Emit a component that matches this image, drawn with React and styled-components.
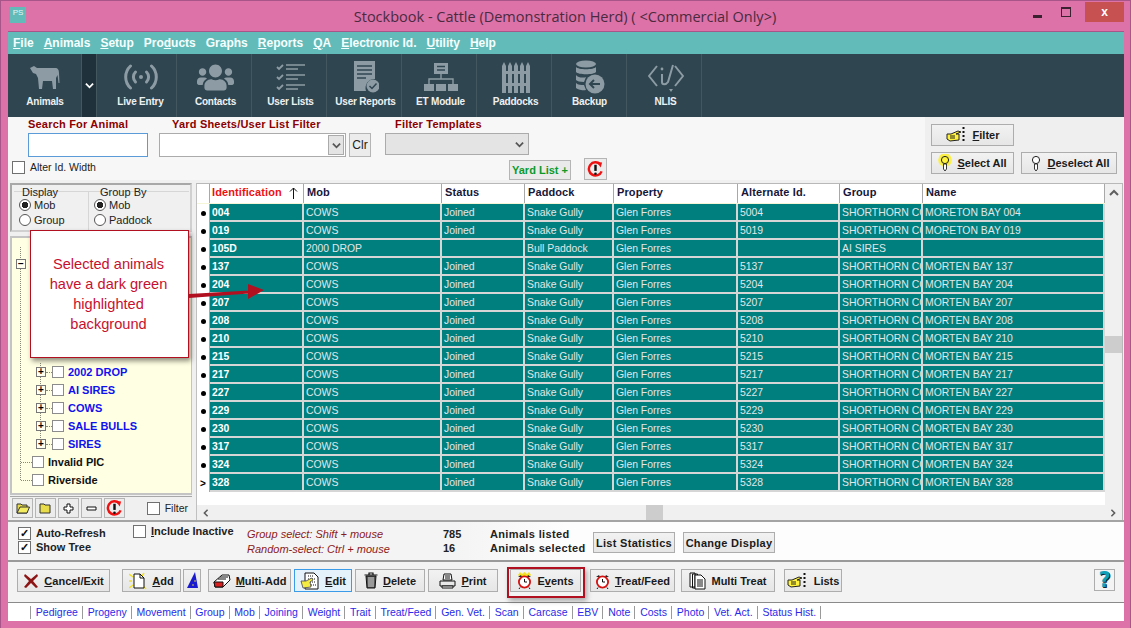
import React from 'react';
import styled, { createGlobalStyle } from 'styled-components';
import { FaUsers } from 'react-icons/fa';

const GlobalStyle = createGlobalStyle`
  html, body { margin: 0; padding: 0; background: #dc72a8; overflow: hidden; }
  * { box-sizing: border-box; }
  body { font-family: "Liberation Sans", Arial, sans-serif; }
`;

const COLUMNS = '13px 94px 138px 83px 89px 124px 102px 83px 182px';
const LABEL_RED = '#8b0000';

const Shell = styled.div`
  width: 1131px;
  height: 628px;
  background: #dc72a8;
  border: 1px solid #a8558a;
  border-bottom: 0;
  display: flex;
  flex-direction: column;
  overflow: hidden;
  position: relative;
`;

const TitleBar = styled.div`
  height: 30px;
  flex: none;
  display: flex;
  align-items: flex-start;
  position: relative;
  padding-left: 9px;
`;

const AppIcon = styled.div`
  width: 16px;
  height: 16px;
  margin-top: 6px;
  background: #62bbb8;
  color: #e6f5f4;
  font-size: 8px;
  text-align: center;
  line-height: 12px;
`;

const TitleText = styled.div`
  flex: 1;
  text-align: center;
  font-family: "Open Sans", sans-serif;
  font-size: 14.5px;
  line-height: 31px;
  color: #4b2a3f;
  padding-left: 77px;
`;

const WinControls = styled.div`
  display: flex;
  align-items: flex-start;
  margin-right: 6px;
  margin-top: 1px;
`;

const WinGlyph = styled.div`
  width: ${p => p.$w}px;
  height: 20px;
  display: flex;
  align-items: center;
  justify-content: center;
  background: ${p => p.$close ? '#c75050' : 'transparent'};
  color: #fff;
  font-size: 12px;
  font-weight: bold;
`;

const MinBar = styled.span`
  width: 9px;
  height: 3px;
  margin-top: 8px;
  background: #3a2230;
`;

const MaxBox = styled.span`
  width: 10px;
  height: 10px;
  border: 1px solid #3a2230;
  border-top-width: 2px;
`;

const Content = styled.div`
  margin: 0 6px 0 7px;
  height: 590px;
  flex: none;
  display: flex;
  flex-direction: column;
  background: #f0f0f0;
`;

const MenuBar = styled.div`
  height: 23px;
  flex: none;
  background: #62bbb8;
  border-top: 1px solid #a8558a;
  display: flex;
  align-items: center;
  padding-left: 5px;
  gap: 10px;
`;

const MenuItem = styled.span`
  color: #f6ffff;
  font-size: 12px;
  font-weight: bold;
`;

const ToolBar = styled.div`
  height: 63px;
  flex: none;
  background: #2f4550;
  display: flex;
`;

const ToolItem = styled.div`
  width: ${p => p.$w || 75}px;
  display: flex;
  flex-direction: column;
  align-items: center;
  color: #8d9ca4;
  border-right: 1px solid #43575f;
  padding-top: 7px;
  padding-left: ${p => p.$left ?? 3}px;
`;

const ToolArrow = styled.div`
  width: 15px;
  background: #1f323b;
  display: flex;
  align-items: center;
  justify-content: center;
  border-right: 1px solid #43575f;
`;

const ToolIconBox = styled.div`
  height: 32px;
  display: flex;
  align-items: center;
  justify-content: center;
`;

const ToolLabel = styled.div`
  color: #eef1f2;
  font-size: 10px;
  font-weight: bold;
  letter-spacing: -0.2px;
  margin-top: 3px;
  white-space: nowrap;
`;

const FilterBar = styled.div`
  height: 63px;
  flex: none;
  background: #f7f7f7;
  display: flex;
`;

const FilterGrid = styled.div`
  flex: 1;
  display: grid;
  grid-template-columns: 147px 226px 1fr;
  grid-template-rows: 16px 25px 1fr;
  padding-left: 4px;
`;

const FieldLabel = styled.div`
  color: ${LABEL_RED};
  font-size: 11px;
  font-weight: bold;
  letter-spacing: 0.2px;
  line-height: 15px;
  padding-left: ${p => p.$indent || 0}px;
  white-space: nowrap;
`;

const SearchInput = styled.div`
  width: 120px;
  height: 24px;
  margin-left: 16px;
  background: #fff;
  border: 1px solid #5a9bd8;
`;

const SelectRow = styled.div`
  display: flex;
  gap: 3px;
`;

const FakeSelect = styled.div`
  width: ${p => p.$w}px;
  height: ${p => p.$h || 24}px;
  background: ${p => p.$grey ? '#e4e4e4' : '#fff'};
  border: 1px solid #ababab;
  display: flex;
  justify-content: flex-end;
  align-items: center;
`;

const SelectArrow = styled.div`
  width: 16px;
  height: 20px;
  margin-right: 1px;
  background: ${p => p.$flat ? 'transparent' : '#e4e4e4'};
  border: ${p => p.$flat ? '0' : '1px solid #aaa'};
  display: flex;
  align-items: center;
  justify-content: center;
`;

const ClrButton = styled.div`
  width: 22px;
  height: 24px;
  background: #ececec;
  border: 1px solid #b5b5b5;
  font-size: 12px;
  line-height: 22px;
  text-align: center;
  color: #222;
`;

const AlterRow = styled.div`
  display: flex;
  align-items: center;
  gap: 5px;
  font-size: 10.5px;
  color: #222;
  height: 14px;
  margin-top: 2px;
`;

const CheckBox = styled.span`
  width: 13px;
  height: 13px;
  flex: none;
  background: #fff;
  border: 1px solid #707070;
  display: inline-flex;
  align-items: center;
  justify-content: center;
  font-size: 11px;
  font-weight: bold;
  line-height: 1;
  color: #111;
`;

const FilterActions = styled.div`
  grid-column: 3;
  display: flex;
  gap: 13px;
  padding-left: 124px;
  align-items: flex-start;
`;

const YardButton = styled.div`
  width: 62px;
  height: 20px;
  margin-top: 2px;
  background: #eaeaea;
  border: 1px solid #b5b5b5;
  color: #0a9a2a;
  font-size: 11px;
  font-weight: bold;
  line-height: 18px;
  text-align: center;
`;

const SquareButton = styled.div`
  width: 23px;
  height: 22px;
  background: #ececec;
  border: 1px solid #b5b5b5;
  display: flex;
  align-items: center;
  justify-content: center;
`;

const SelectPanel = styled.div`
  width: 199px;
  flex: none;
  padding: 7px 7px 0 6px;
  background: #efefef;
  display: grid;
  grid-template-columns: 83px 96px;
  grid-template-rows: 22px 22px;
  column-gap: 7px;
  row-gap: 6px;
`;

const Btn = styled.div`
  width: ${p => p.$w}px;
  height: ${p => p.$h || 23}px;
  flex: none;
  position: relative;
  margin-left: ${p => p.$ml || 0}px;
  background: ${p => p.$active ? '#e5f1fb' : 'linear-gradient(#f2f2f2, #e6e6e6)'};
  border: 1px solid ${p => p.$active ? '#3c9be8' : '#adadad'};
  display: flex;
  align-items: center;
  justify-content: center;
  gap: 5px;
  font-size: 11px;
  font-weight: bold;
  letter-spacing: ${p => p.$wide ? '0.3px' : '0'};
  color: #1a1a1a;
  white-space: nowrap;
  &::after {
    content: '';
    display: ${p => p.$marked ? 'block' : 'none'};
    position: absolute;
    left: -4px;
    right: -5px;
    top: -3px;
    bottom: -7px;
    border: 2px solid #b01020;
    box-shadow: 2px 3px 5px rgba(0, 0, 0, 0.3);
  }
`;

const MainArea = styled.div`
  height: 340px;
  flex: none;
  display: flex;
  background: #f0f0f0;
`;

const LeftPanel = styled.div`
  width: 182px;
  margin-left: 2px;
  margin-right: 4px;
  flex: none;
  display: flex;
  flex-direction: column;
  padding-top: 3px;
`;

const GroupBox = styled.div`
  height: 49px;
  flex: none;
  border: 2px solid #a8a8a8;
  border-right-color: #d0d0d0;
  border-bottom-color: #d0d0d0;
  padding: 2px 1px 0 2px;
  display: flex;
  font-size: 11px;
  color: #222;
`;

const GroupCol = styled.div`
  width: ${p => p.$w}px;
  border-top: 1px solid #d6d6d6;
  border-right: ${p => p.$divide ? '1px solid #d6d6d6' : '0'};
  margin-top: 4px;
  padding-left: 5px;
`;

const GroupTitle = styled.div`
  margin-top: -5px;
  padding-left: ${p => p.$indent}px;
  line-height: 11px;
  margin-bottom: -1px;
`;

const RadioRow = styled.div`
  height: 15px;
  display: flex;
  align-items: center;
  gap: 3px;
`;

const Radio = styled.span`
  width: 12px;
  height: 12px;
  border: 1px solid #555;
  border-radius: 50%;
  background: ${p => p.$on ? 'radial-gradient(circle, #222 0 3px, #fff 3.5px)' : '#fff'};
`;

const Tree = styled.div`
  height: 259px;
  flex: none;
  margin-top: 4px;
  background: #ffffe3;
  border: 2px solid #c4c4c4;
  border-right-width: 1px;
  padding: 9px 0 0 8px;
  overflow: hidden;
`;

const Trunk = styled.div`
  height: 233px;
  padding-top: 116px;
  border-left: 1px dotted #8a8a7a;
  position: relative;
`;

const ExpandBox = styled.span`
  width: 10px;
  height: 10px;
  flex: none;
  background: #fffff0;
  border: 1px solid #777;
  display: inline-flex;
  align-items: center;
  justify-content: center;
  font-size: 10px;
  line-height: 8px;
  color: #000;
  font-weight: bold;
`;

const RootToggle = styled(ExpandBox)`
  position: absolute;
  left: -5px;
  top: 12px;
`;

const Branch = styled.div`
  margin-left: 19px;
  height: 81px;
  margin-bottom: 9px;
  border-left: 1px dotted #8a8a7a;
`;

const TreeRow = styled.div`
  height: 18px;
  display: flex;
  align-items: center;
  margin-left: ${p => p.$indent || 0}px;
  font-size: 11px;
  font-weight: bold;
  color: ${p => p.$leaf ? '#1111f0' : '#111'};
`;

const TreeDash = styled.span`
  width: ${p => p.$w}px;
  flex: none;
  border-top: 1px dotted #8a8a7a;
`;

const TreeCheck = styled.span`
  width: 12px;
  height: 12px;
  flex: none;
  background: #fff;
  border: 1px solid #8c8c8c;
  margin-right: 4px;
`;

const TreeTools = styled.div`
  height: 23px;
  flex: none;
  margin-top: 1px;
  border-top: 1px solid #a8a8a8;
  display: flex;
  align-items: center;
  padding-left: 2px;
  gap: 2px;
`;

const TinyButton = styled.div`
  width: 21px;
  height: 20px;
  background: #ececec;
  border: 1px solid #b5b5b5;
  display: flex;
  align-items: center;
  justify-content: center;
`;

const TreeFilter = styled.div`
  margin-left: auto;
  display: flex;
  align-items: center;
  gap: 5px;
  font-size: 10.5px;
  color: #222;
  padding-right: 4px;
`;

const GridPanel = styled.div`
  width: 927px;
  flex: none;
  margin-top: 3px;
  border-top: 1px solid #b8b8b8;
  border-left: 1px solid #c0c0c0;
  border-right: 1px solid #b8b8b8;
  display: flex;
  flex-direction: column;
  height: 337px;
  background: #fff;
`;

const GridBody = styled.div`
  flex: 1;
  display: flex;
  min-height: 0;
`;

const Table = styled.div`
  width: 908px;
  flex: none;
  overflow: hidden;
`;

const HeaderRow = styled.div`
  display: grid;
  grid-template-columns: ${COLUMNS};
  height: 20px;
  background: #fff;
  border-bottom: 1px solid #f5f5d8;
`;

const HeaderCell = styled.div`
  border-right: 1px solid #a8a8a8;
  padding: 0 5px 2px ${p => p.$first ? 2 : 3}px;
  font-size: 11px;
  font-weight: bold;
  line-height: 17px;
  letter-spacing: 0.1px;
  color: ${p => p.$red ? '#f01010' : '#16163a'};
  display: flex;
  align-items: center;
  justify-content: space-between;
`;

const DataRow = styled.div`
  display: grid;
  grid-template-columns: ${COLUMNS};
  height: 18px;
`;

const Marker = styled.div`
  background: #fff;
  border-right: 1px solid #a8a8a8;
  display: flex;
  align-items: center;
  justify-content: center;
  font-size: 10px;
  color: #000;
`;

const Dot = styled.span`
  width: 5px;
  height: 5px;
  border-radius: 50%;
  background: #000;
`;

const Cell = styled.div`
  background: #007f7f;
  border-right: 2px solid #d6d6d6;
  border-bottom: 2px solid #d6d6d6;
  padding-left: 2px;
  font-size: 10.4px;
  font-weight: ${p => p.$bold ? 'bold' : 'normal'};
  color: ${p => p.$bold ? '#fff' : '#e0e8e8'};
  line-height: 17px;
  white-space: nowrap;
  overflow: hidden;
`;

const ScrollV = styled.div`
  width: 17px;
  flex: none;
  background: #f0f0f0;
  display: flex;
  flex-direction: column;
  align-items: center;
`;

const ScrollArrow = styled.div`
  height: 17px;
  display: flex;
  align-items: center;
  justify-content: center;
  flex: none;
`;

const ThumbV = styled.div`
  width: 100%;
  height: 17px;
  margin-top: 135px;
  background: #cdcdcd;
`;

const ScrollH = styled.div`
  height: 15px;
  flex: none;
  background: #f0f0f0;
  display: flex;
  align-items: center;
  justify-content: space-between;
  padding: 0 5px;
`;

const ThumbH = styled.div`
  width: 17px;
  height: 15px;
  background: #cdcdcd;
  margin-left: 432px;
  margin-right: 442px;
`;

const StatusPanel = styled.div`
  height: 40px;
  flex: none;
  display: flex;
  background: linear-gradient(90deg, #f4f4f4 40%, #fdfdfd 50%);
  border-top: 2px solid #a4a4a4;
`;

const CheckStack = styled.div`
  width: 125px;
  flex: none;
  padding: 4px 0 0 10px;
`;

const CheckLine = styled.div`
  height: 14px;
  display: flex;
  align-items: center;
  gap: 5px;
  font-size: 11px;
  font-weight: bold;
  color: #222;
  white-space: nowrap;
`;

const InactiveCol = styled.div`
  width: 114px;
  flex: none;
  padding-top: 2px;
`;

const HintCol = styled.div`
  width: 196px;
  flex: none;
  padding-top: 5px;
  font-size: 11px;
  font-style: italic;
  color: #8b1a1a;
  line-height: 15px;
  white-space: nowrap;
`;

const CountCol = styled.div`
  width: 47px;
  flex: none;
  padding-top: 5px;
  font-size: 11px;
  font-weight: bold;
  line-height: 14px;
  color: #222;
`;

const CountLabels = styled(CountCol)`
  width: 103px;
  letter-spacing: 0.35px;
`;

const StatusButtons = styled.div`
  display: flex;
  gap: 8px;
  padding-top: 10px;
`;

const ActionBar = styled.div`
  height: 43px;
  flex: none;
  background: #f3f3f3;
  border-top: 2px solid #9a9a9a;
  border-bottom: 1px solid #8a8a8a;
  display: flex;
  align-items: flex-start;
  padding: 7px 0 0 9px;
`;

const HelpBtn = styled(Btn)`
  margin-left: auto;
  margin-right: 9px;
  background: #f4f4f4;
`;

const LinkBar = styled.div`
  height: 18px;
  flex: none;
  background: #fff;
  display: flex;
  align-items: center;
  padding-left: 22px;
`;

const LinkItem = styled.span`
  height: 13px;
  display: flex;
  align-items: center;
  padding: 0 4px 0 4.8px;
  border-left: 1px solid #9a9a9a;
  border-right: ${p => p.$last ? '1px solid #9a9a9a' : '0'};
  font-size: 10.5px;
  color: #2a2ae8;
  white-space: nowrap;
`;

const Callout = styled.div`
  position: absolute;
  left: 29px;
  top: 229px;
  width: 159px;
  height: 128px;
  background: #fff;
  border: 1px solid #b01020;
  box-shadow: 2px 3px 5px rgba(0, 0, 0, 0.45);
  display: flex;
  align-items: center;
  justify-content: center;
  text-align: center;
  color: #c8102e;
  font-size: 14.6px;
  line-height: 20px;
  padding: 0 12px 0 10px;
`;

const CalloutArrow = styled.svg`
  position: absolute;
  left: 186px;
  top: 279px;
`;

const ChevronSvg = styled.svg`
  transform: rotate(${p => p.$rot || 0}deg);
`;

// tool bar drawings
const CowIcon = () => (
  <svg width="30" height="26" viewBox="0 0 30 26" fill="currentColor">
    <path d="M0 4 L4 2 L7 4 L25 4 C28 4 29 6 29 9 L29.5 19 L28.5 19 L27.5 11 L26 14 L26 25 L23 25 L22 17 L13 17 L12 25 L9 25 L8 14 L6 10 L3 9 Z" />
  </svg>
);

const LiveIcon = () => (
  <svg width="34" height="26" viewBox="0 0 34 26" fill="none" stroke="currentColor" strokeWidth="3" strokeLinecap="round">
    <circle cx="17" cy="13" r="2" fill="currentColor" stroke="none" />
    <path d="M11.5 8 A7 7 0 0 0 11.5 18" />
    <path d="M22.5 8 A7 7 0 0 1 22.5 18" />
    <path d="M6.5 2 A15 15 0 0 0 6.5 24" />
    <path d="M27.5 2 A15 15 0 0 1 27.5 24" />
  </svg>
);

const ListsIcon = () => (
  <svg width="30" height="28" viewBox="0 0 30 28" fill="none" stroke="currentColor">
    <path d="M1 4 L3 6 L7 2 M1 14 L3 16 L7 12 M1 24 L3 26 L7 22" strokeWidth="1.8" />
    <path d="M10 2 H29 M10 6 H22 M10 12 H29 M10 16 H22 M10 22 H29 M10 26 H22" strokeWidth="1.6" />
  </svg>
);

const ReportIcon = () => (
  <svg width="26" height="33" viewBox="0 0 26 33" fill="currentColor">
    <path d="M1 0 H22 V18 A9 9 0 0 0 13 30 H1 Z" />
    <path d="M4 5 H19 M4 9 H19 M4 13 H19 M4 17 H13" stroke="#2f4550" strokeWidth="1.3" />
    <circle cx="20" cy="25" r="6.5" />
    <path d="M16.5 25 L19 27.5 L23.5 22.5" stroke="#2f4550" strokeWidth="1.5" fill="none" />
  </svg>
);

const OrgIcon = () => (
  <svg width="34" height="30" viewBox="0 0 34 30" fill="currentColor">
    <path d="M10 1 H24 V12 H10 Z" />
    <path d="M13 4.5 H21 M13 8 H21" stroke="#2f4550" strokeWidth="1.3" />
    <path d="M17 12 V17 M5 22 V17 H29 V22" stroke="currentColor" strokeWidth="1.4" fill="none" />
    <path d="M0 22 H10 V29 H0 Z M12 22 H22 V29 H12 Z M24 22 H34 V29 H24 Z" />
  </svg>
);

const FenceIcon = () => (
  <svg width="28" height="32" viewBox="0 0 28 32" fill="currentColor">
    <path d="M0 32 V5 L2 1 L4 5 V32 Z M6 32 V5 L8 1 L10 5 V32 Z M12 32 V5 L14 1 L16 5 V32 Z M18 32 V5 L20 1 L22 5 V32 Z M24 32 V5 L26 1 L28 5 V32 Z" />
    <path d="M0 10 H28 V13 H0 Z M0 22 H28 V25 H0 Z" />
  </svg>
);

const BackupIcon = () => (
  <svg width="30" height="34" viewBox="0 0 30 34" fill="currentColor">
    <ellipse cx="11" cy="4" rx="10" ry="3.5" />
    <path d="M1 7 C3 10 19 10 21 7 V12 C19 15 3 15 1 12 Z M1 15 C3 18 9 18 11 17 L9 22 C5 22 2 21 1 20 Z M1 23 C3 25 6 25 9 25 L11 30 C7 31 2 29 1 28 Z" />
    <circle cx="20" cy="24" r="9.5" />
    <path d="M25 24 H16 M19 20 L15 24 L19 28" stroke="#2f4550" strokeWidth="2" fill="none" />
  </svg>
);

const NlisIcon = () => (
  <svg width="36" height="32" viewBox="0 0 36 32" fill="none" stroke="currentColor" strokeWidth="2">
    <path d="M9 5 L1 15 L9 25 M27 5 L35 15 L27 25" />
    <path d="M14 13 V21 C14 24 18 24 20 21 L25 4" />
    <circle cx="14" cy="8" r="1.4" fill="currentColor" stroke="none" />
    <path d="M21 28 L25 28 L23 31 Z" fill="currentColor" stroke="none" />
  </svg>
);

const Chevron = ({ color = '#fff', size = 9, width = 2, rot = 0 }) => (
  <ChevronSvg $rot={rot} width={size} height={size} viewBox="0 0 10 10" fill="none" stroke={color} strokeWidth={width}>
    <path d="M1 3 L5 7 L9 3" />
  </ChevronSvg>
);

const SortArrow = () => (
  <svg width="9" height="12" viewBox="0 0 9 12" fill="none" stroke="#111">
    <path d="M4.5 12 V1 M1 4.5 L4.5 1 L8 4.5" />
  </svg>
);

// small button drawings
const HandIcon = () => (
  <svg width="22" height="16" viewBox="0 0 22 16">
    <path d="M1 7 L5 7 L12 4 L15 5 L10 7 L13 7 L13 13 L4 14 L1 12 Z" fill="#fff23a" stroke="#222" />
    <path d="M4 9 H9 M4 11 H9" stroke="#222" />
    <path d="M17.5 0 V16" stroke="#111" strokeWidth="2" strokeDasharray="2 2" />
  </svg>
);

const BulbIcon = ({ lit }) => (
  <svg width="14" height="18" viewBox="0 0 14 18">
    {lit && <circle cx="7" cy="6" r="6.8" fill="#fbf04a" />}
    <circle cx="7" cy="6" r="3.6" fill={lit ? '#fff23a' : '#fff'} stroke="#222" />
    <path d="M5.5 10 H8.5 V15 L7 17 L5.5 15 Z" fill="#fff" stroke="#222" strokeWidth="0.9" />
  </svg>
);

const RefreshIcon = ({ size = 18 }) => (
  <svg width={size} height={size} viewBox="0 0 18 18" fill="none">
    <path d="M14 3.5 A7 7 0 1 0 15.5 11" stroke="#ee1111" strokeWidth="2.6" />
    <path d="M10.5 1 L16 1.5 L14.5 7 Z" fill="#ee1111" />
    <path d="M9 4 V10.5" stroke="#111" strokeWidth="2.6" />
    <circle cx="9" cy="13.5" r="1.4" fill="#111" />
  </svg>
);

const FolderIcon = ({ open }) => (
  <svg width="14" height="12" viewBox="0 0 14 12">
    <path d="M1 2 H5 L6 3 H11 V11 H1 Z" fill="#e8dc4a" stroke="#333" />
    {open && <path d="M1 11 L4 5 H13.5 L11 11 Z" fill="#f4ec60" stroke="#333" />}
  </svg>
);

const PlusIcon = () => (
  <svg width="11" height="11" viewBox="0 0 11 11">
    <path d="M4 1 H7 V4 H10 V7 H7 V10 H4 V7 H1 V4 H4 Z" fill="#fff" stroke="#111" />
  </svg>
);

const MinusIcon = () => (
  <svg width="11" height="5" viewBox="0 0 11 5">
    <path d="M1 1 H10 V4 H1 Z" fill="#fff" stroke="#111" />
  </svg>
);

const CrossIcon = () => (
  <svg width="16" height="16" viewBox="0 0 16 16">
    <path d="M2 1 L8 6 L14 1 L15 3 L10 8 L15 14 L13 15 L8 10 L3 15 L1 14 L6 8 L1 3 Z" fill="#8c1414" />
  </svg>
);

const NewDocIcon = () => (
  <svg width="18" height="18" viewBox="0 0 18 18">
    <path d="M0 2 L4 5 M0 16 L4 13 M17 17 L14 14 M3 9 H0 M15 1 L13 4" stroke="#f2e020" strokeWidth="1.4" />
    <path d="M5 2 H11 L15 6 V16 H5 Z" fill="#fff" stroke="#111" />
    <path d="M11 2 V6 H15" fill="none" stroke="#111" />
  </svg>
);

const HatIcon = () => (
  <svg width="11" height="17" viewBox="0 0 11 17">
    <path d="M8 0 L11 16 H0 Z" fill="#1a1ad0" />
    <circle cx="8" cy="9" r="0.8" fill="#f2e020" />
    <circle cx="6" cy="13" r="0.8" fill="#f2e020" />
  </svg>
);

const MultiAddIcon = () => (
  <svg width="18" height="14" viewBox="0 0 18 14">
    <path d="M1 8 L9 1 H16 L17 6 L10 13 H2 Z" fill="#fff" stroke="#111" />
    <path d="M1 8 H10 L10 13 H2 Z" fill="#d92020" stroke="#111" />
    <path d="M5 5 H13 M7 3 H15" stroke="#111" />
  </svg>
);

const EditIcon = () => (
  <svg width="20" height="18" viewBox="0 0 20 18">
    <path d="M5 1 H14 L18 5 V17 H5 Z" fill="#fff" stroke="#111" />
    <path d="M8 4 H13 M8 7 H16 M8 10 H16 M11 13 H16" stroke="#111" strokeDasharray="1 1" />
    <path d="M1 9 L6 9 L12 6 L13 8 L10 10 L11 15 L3 16 Z" fill="#f4ec40" stroke="#445" strokeWidth="0.8" />
  </svg>
);

const TrashIcon = () => (
  <svg width="14" height="17" viewBox="0 0 14 17">
    <path d="M0.5 3 H13.5 M5 3 V1 H9 V3" stroke="#111" strokeWidth="1.2" fill="none" />
    <path d="M2 4 H12 L11 16 H3 Z" fill="#555" stroke="#111" />
    <path d="M5 5 V15 M7 5 V15 M9 5 V15" stroke="#ddd" />
  </svg>
);

const PrintIcon = () => (
  <svg width="17" height="16" viewBox="0 0 17 16">
    <path d="M5 1 H12 L13 7 H4 Z" fill="#fff" stroke="#111" />
    <path d="M1 8 H16 V13 H1 Z" fill="#e8e8e8" stroke="#111" />
    <path d="M3 13 H14 V15 H3 Z" fill="#fff" stroke="#111" />
    <path d="M6 3 H11 M6 5 H11" stroke="#111" />
  </svg>
);

const ClockIcon = ({ flare }) => (
  <svg width="15" height="17" viewBox="0 0 15 17">
    {flare && <path d="M1 3 L3 0 L5 2 L7.5 0 L10 2 L12 0 L14 3 L12 5 H3 Z" fill="#f2e020" />}
    <path d="M1 5 L4 3 L5 5 Z M14 5 L11 3 L10 5 Z" fill="#222" />
    <circle cx="7.5" cy="10" r="5.6" fill="#fff" stroke="#d31212" strokeWidth="1.8" />
    <path d="M7.5 7 V10 H10" stroke="#111" fill="none" />
    <path d="M3 15.5 L2 17 M12 15.5 L13 17" stroke="#111" />
  </svg>
);

const DocsIcon = () => (
  <svg width="17" height="18" viewBox="0 0 17 18">
    <path d="M1 1 H6 V15 H1 Z M3.5 2 H8.5 V16 H3.5 Z" fill="#fff" stroke="#111" />
    <path d="M6 3 H12 L16 7 V17 H6 Z" fill="#fff" stroke="#111" />
    <path d="M8 8 H14 M8 10 H14 M8 12 H14 M8 14 H14" stroke="#111" />
  </svg>
);

const HelpMark = styled.span`
  font-size: 21px;
  font-weight: bold;
  color: #10a0b8;
  text-shadow: 1px 1px 0 #123;
  font-family: "DejaVu Sans", sans-serif;
`;

const menuItems = [
  ['F', 'ile'], ['A', 'nimals'], ['S', 'etup'], ['Pro', 'd', 'ucts'], ['Graphs'],
  ['R', 'eports'], ['Q', 'A'], ['E', 'lectronic Id.'], ['U', 'tility'], ['H', 'elp'],
];

const Mnemonic = ({ parts }) => {
  if (parts.length === 1) return parts[0];
  if (parts.length === 3) return <>{parts[0]}<u>{parts[1]}</u>{parts[2]}</>;
  return <><u>{parts[0]}</u>{parts[1]}</>;
};

const cows = [
  ['004', 'MORETON BAY 004'], ['019', 'MORETON BAY 019'], ['137', 'MORTEN BAY 137'],
  ['204', 'MORTEN BAY 204'], ['207', 'MORTEN BAY 207'], ['208', 'MORTEN BAY 208'],
  ['210', 'MORTEN BAY 210'], ['215', 'MORTEN BAY 215'], ['217', 'MORTEN BAY 217'],
  ['227', 'MORTEN BAY 227'], ['229', 'MORTEN BAY 229'], ['230', 'MORTEN BAY 230'],
  ['317', 'MORTEN BAY 317'], ['324', 'MORTEN BAY 324'], ['328', 'MORTEN BAY 328'],
].map(([id, name]) => [
  id, 'COWS', 'Joined', 'Snake Gully', 'Glen Forres',
  `5${id}`, 'SHORTHORN CC', name,
]);

const rows = [
  ...cows.slice(0, 2),
  ['105D', '2000 DROP', '', 'Bull Paddock', 'Glen Forres', '', 'AI SIRES', ''],
  ...cows.slice(2),
];

const headers = ['Mob', 'Status', 'Paddock', 'Property', 'Alternate Id.', 'Group', 'Name'];
const mobs = ['2002 DROP', 'AI SIRES', 'COWS', 'SALE BULLS', 'SIRES'];
const links = [
  'Pedigree', 'Progeny', 'Movement', 'Group', 'Mob', 'Joining', 'Weight', 'Trait', 'Treat/Feed',
  'Gen. Vet.', 'Scan', 'Carcase', 'EBV', 'Note', 'Costs', 'Photo', 'Vet. Act.', 'Status Hist.',
];

export default function App() {
  return (
    <Shell>
      <GlobalStyle />
      <TitleBar>
        <AppIcon>PS</AppIcon>
        <TitleText>Stockbook - Cattle (Demonstration Herd) ( &lt;Commercial Only&gt;)</TitleText>
        <WinControls>
          <WinGlyph $w={20}><MinBar /></WinGlyph>
          <WinGlyph $w={38}><MaxBox /></WinGlyph>
          <WinGlyph $w={39} $close>x</WinGlyph>
        </WinControls>
      </TitleBar>

      <Content>
        <MenuBar>
          {menuItems.map(parts => (
            <MenuItem key={parts.join('')}><Mnemonic parts={parts} /></MenuItem>
          ))}
        </MenuBar>

        <ToolBar>
          <ToolItem $w={74} $left={1}>
            <ToolIconBox><CowIcon /></ToolIconBox>
            <ToolLabel>Animals</ToolLabel>
          </ToolItem>
          <ToolArrow><Chevron /></ToolArrow>
          <ToolItem $w={80} $left={8}><ToolIconBox><LiveIcon /></ToolIconBox><ToolLabel>Live Entry</ToolLabel></ToolItem>
          <ToolItem><ToolIconBox><FaUsers size={37} /></ToolIconBox><ToolLabel>Contacts</ToolLabel></ToolItem>
          <ToolItem><ToolIconBox><ListsIcon /></ToolIconBox><ToolLabel>User Lists</ToolLabel></ToolItem>
          <ToolItem><ToolIconBox><ReportIcon /></ToolIconBox><ToolLabel>User Reports</ToolLabel></ToolItem>
          <ToolItem><ToolIconBox><OrgIcon /></ToolIconBox><ToolLabel>ET Module</ToolLabel></ToolItem>
          <ToolItem><ToolIconBox><FenceIcon /></ToolIconBox><ToolLabel>Paddocks</ToolLabel></ToolItem>
          <ToolItem $left={1}><ToolIconBox><BackupIcon /></ToolIconBox><ToolLabel>Backup</ToolLabel></ToolItem>
          <ToolItem><ToolIconBox><NlisIcon /></ToolIconBox><ToolLabel>NLIS</ToolLabel></ToolItem>
        </ToolBar>

        <FilterBar>
          <FilterGrid>
            <FieldLabel $indent={16}>Search For Animal</FieldLabel>
            <FieldLabel $indent={13}>Yard Sheets/User List Filter</FieldLabel>
            <FieldLabel $indent={10}>Filter Templates</FieldLabel>
            <SearchInput />
            <SelectRow>
              <FakeSelect $w={187}><SelectArrow><Chevron color="#555" /></SelectArrow></FakeSelect>
              <ClrButton>Clr</ClrButton>
            </SelectRow>
            <FakeSelect $w={144} $h={22} $grey>
              <SelectArrow $flat><Chevron color="#555" /></SelectArrow>
            </FakeSelect>
            <AlterRow><CheckBox />Alter Id. Width</AlterRow>
            <FilterActions>
              <YardButton>Yard List +</YardButton>
              <SquareButton><RefreshIcon size={17} /></SquareButton>
            </FilterActions>
          </FilterGrid>
          <SelectPanel>
            <Btn $w={83} $h={22}><HandIcon /><span><u>F</u>ilter</span></Btn>
            <span />
            <Btn $w={83} $h={22}><BulbIcon lit /><span><u>S</u>elect All</span></Btn>
            <Btn $w={96} $h={22}><BulbIcon /><span><u>D</u>eselect All</span></Btn>
          </SelectPanel>
        </FilterBar>

        <MainArea>
          <LeftPanel>
            <GroupBox>
              <GroupCol $w={75} $divide>
                <GroupTitle $indent={3}>Display</GroupTitle>
                <RadioRow><Radio $on />Mob</RadioRow>
                <RadioRow><Radio />Group</RadioRow>
              </GroupCol>
              <GroupCol $w={100}>
                <GroupTitle $indent={6}>Group By</GroupTitle>
                <RadioRow><Radio $on />Mob</RadioRow>
                <RadioRow><Radio />Paddock</RadioRow>
              </GroupCol>
            </GroupBox>
            <Tree>
              <Trunk>
                <RootToggle>−</RootToggle>
                <Branch>
                  {mobs.map(mob => (
                    <TreeRow key={mob} $leaf $indent={-5}>
                      <ExpandBox>+</ExpandBox>
                      <TreeDash $w={6} />
                      <TreeCheck />
                      {mob}
                    </TreeRow>
                  ))}
                </Branch>
                <TreeRow><TreeDash $w={11} /><TreeCheck />Invalid PIC</TreeRow>
                <TreeRow><TreeDash $w={11} /><TreeCheck />Riverside</TreeRow>
              </Trunk>
            </Tree>
            <TreeTools>
              <TinyButton><FolderIcon open /></TinyButton>
              <TinyButton><FolderIcon /></TinyButton>
              <TinyButton><PlusIcon /></TinyButton>
              <TinyButton><MinusIcon /></TinyButton>
              <TinyButton><RefreshIcon size={17} /></TinyButton>
              <TreeFilter><CheckBox />Filter</TreeFilter>
            </TreeTools>
          </LeftPanel>

          <GridPanel>
            <GridBody>
              <Table>
                <HeaderRow>
                  <HeaderCell />
                  <HeaderCell $first $red>Identification <SortArrow /></HeaderCell>
                  {headers.map(h => <HeaderCell key={h}>{h}</HeaderCell>)}
                </HeaderRow>
                {rows.map((row, i) => (
                  <DataRow key={row[0]}>
                    <Marker>{i === rows.length - 1 ? <b>&gt;</b> : <Dot />}</Marker>
                    {row.map((text, c) => <Cell key={c} $bold={c === 0}>{text}</Cell>)}
                  </DataRow>
                ))}
              </Table>
              <ScrollV>
                <ScrollArrow><Chevron color="#606060" size={10} rot={180} /></ScrollArrow>
                <ThumbV />
              </ScrollV>
            </GridBody>
            <ScrollH>
              <Chevron color="#606060" size={8} rot={90} />
              <ThumbH />
              <Chevron color="#606060" size={8} rot={-90} />
            </ScrollH>
          </GridPanel>
        </MainArea>

        <StatusPanel>
          <CheckStack>
            <CheckLine><CheckBox>✓</CheckBox>Auto-Refresh</CheckLine>
            <CheckLine><CheckBox>✓</CheckBox>Show Tree</CheckLine>
          </CheckStack>
          <InactiveCol><CheckLine><CheckBox /><span><u>I</u>nclude Inactive</span></CheckLine></InactiveCol>
          <HintCol>Group select: Shift + mouse<br />Random-select: Ctrl + mouse</HintCol>
          <CountCol>785<br />16</CountCol>
          <CountLabels>Animals listed<br />Animals selected</CountLabels>
          <StatusButtons>
            <Btn $w={82} $h={21} $wide>List Statistics</Btn>
            <Btn $w={92} $h={21} $wide>Change Display</Btn>
          </StatusButtons>
        </StatusPanel>

        <ActionBar>
          <Btn $w={93}><CrossIcon /><span><u>C</u>ancel/Exit</span></Btn>
          <Btn $w={59} $ml={12}><NewDocIcon /><span><u>A</u>dd</span></Btn>
          <Btn $w={18} $ml={2}><HatIcon /></Btn>
          <Btn $w={83} $ml={7}><MultiAddIcon /><span><u>M</u>ulti-Add</span></Btn>
          <Btn $w={58} $ml={3} $active><EditIcon /><span><u>E</u>dit</span></Btn>
          <Btn $w={70} $ml={3}><TrashIcon /><span><u>D</u>elete</span></Btn>
          <Btn $w={70} $ml={3}><PrintIcon /><span><u>P</u>rint</span></Btn>
          <Btn $w={71} $ml={12} $marked><ClockIcon flare /><span>E<u>v</u>ents</span></Btn>
          <Btn $w={85} $ml={9}><ClockIcon /><span><u>T</u>reat/Feed</span></Btn>
          <Btn $w={94} $ml={6}><DocsIcon /><span>Multi Treat</span></Btn>
          <Btn $w={58} $ml={9}><HandIcon /><span>Lists</span></Btn>
          <HelpBtn $w={21} $h={22}><HelpMark>?</HelpMark></HelpBtn>
        </ActionBar>

        <LinkBar>
          {links.map((link, i) => <LinkItem key={link} $last={i === links.length - 1}>{link}</LinkItem>)}
        </LinkBar>
      </Content>

      <Callout>Selected animals have a dark green highlighted background</Callout>
      <CalloutArrow width="78" height="22" viewBox="0 0 78 22">
        <path d="M2 14 L62 10.5 L62 13.5 L2 18 Z M61 4 L77 10 L61 19 Z" fill="#b01020" />
      </CalloutArrow>
    </Shell>
  );
}
